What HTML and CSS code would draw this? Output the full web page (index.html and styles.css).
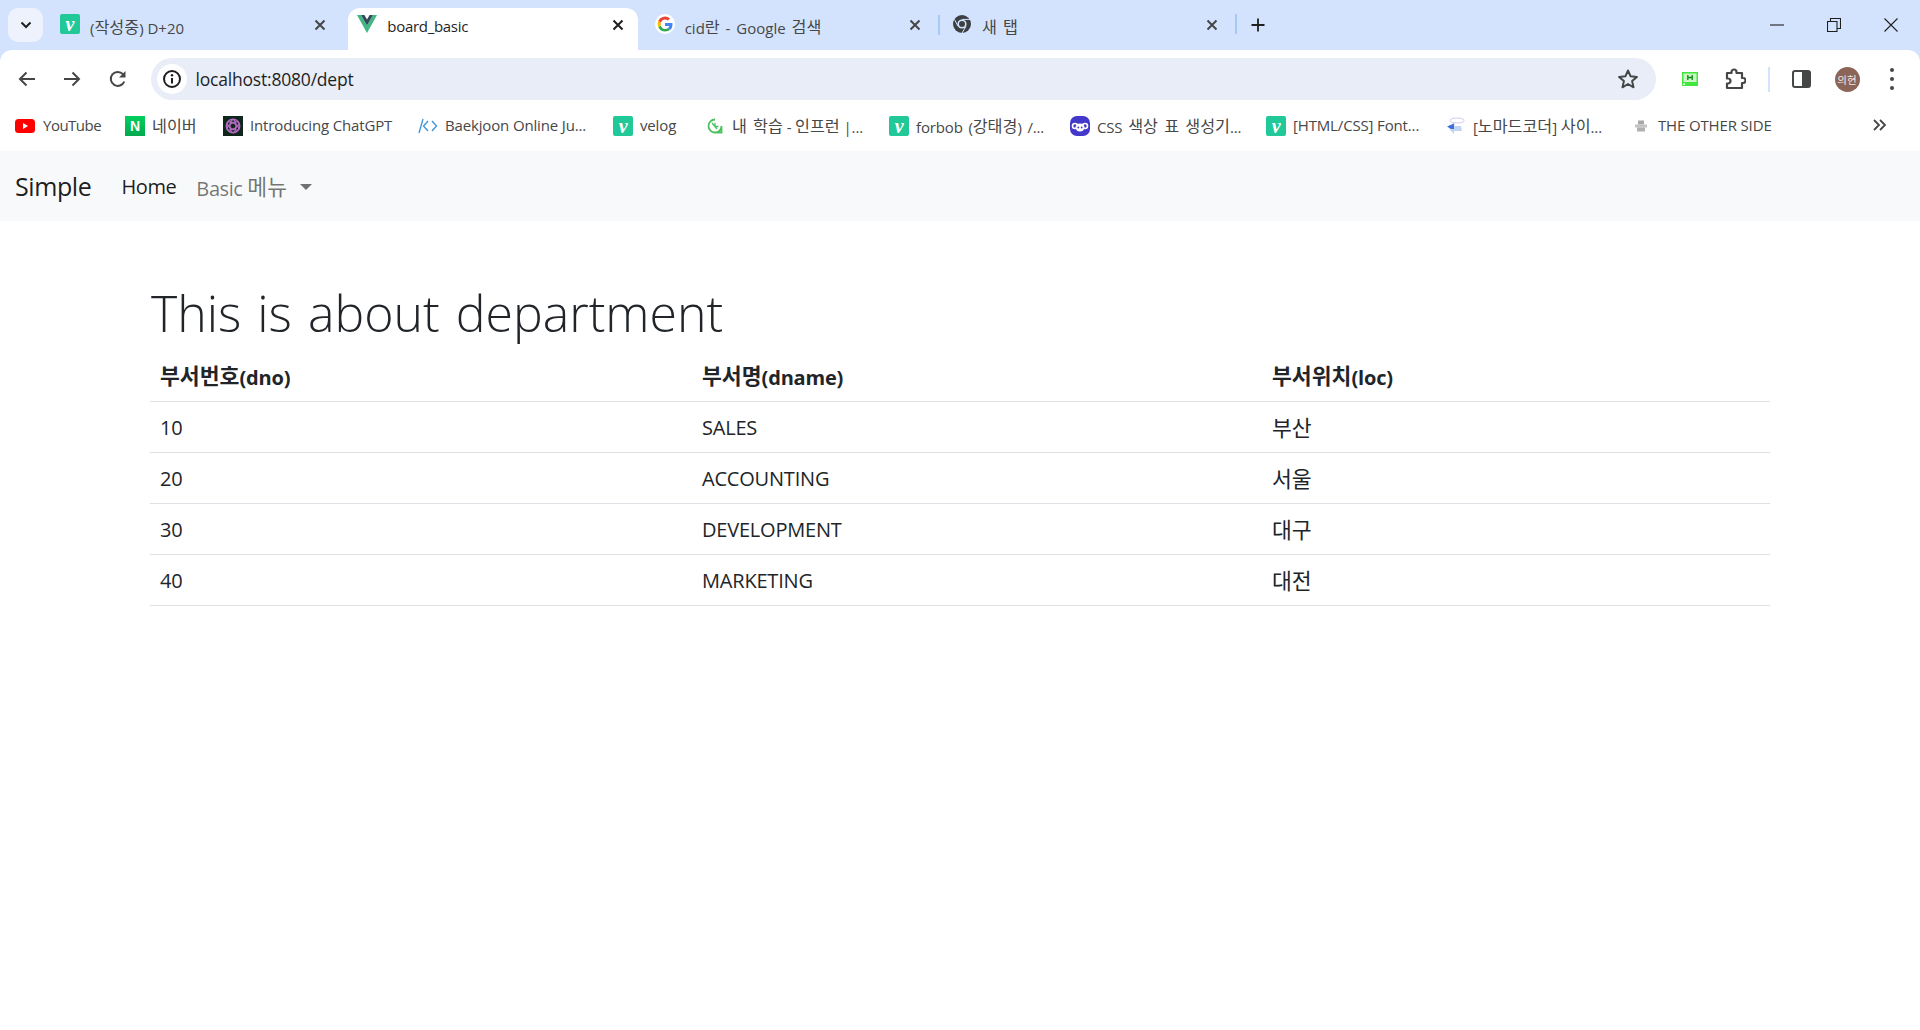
FILE: index.html
```html
<!DOCTYPE html>
<html lang="ko">
<head>
<meta charset="utf-8">
<title>board_basic</title>
<link rel="stylesheet" href="styles.css">
</head>
<body>
<header class="chrome">
  <div class="tabstrip">
    <button class="tablist"><svg width="14" height="14" viewBox="0 0 14 14"><path d="M2.500 4.500 7 9l4.500-4.500" fill="none" stroke="#1f1f1f" stroke-width="2"/></svg></button>
    <div class="tab">
      <span class="fav velog">v</span><span class="tab-title">(<span class="hg">작성중</span>) D+20</span>
      <svg class="tab-x" width="12" height="12" viewBox="0 0 12 12"><path d="M1.500 1.500l9 9M10.500 1.500l-9 9" stroke="#444746" stroke-width="2"/></svg>
    </div>
    <div class="tab active">
      <svg class="fav" width="20" height="20" viewBox="0 0 20 18"><path d="M0 0h4l6 10.500L16 0h4L10 18z" fill="#41b883"/><path d="M4 0h3.400L10 4.600 12.600 0H16l-6 10.500z" fill="#35495e"/></svg><span class="tab-title dark">board_basic</span>
      <svg class="tab-x" width="12" height="12" viewBox="0 0 12 12"><path d="M1.500 1.500l9 9M10.500 1.500l-9 9" stroke="#1f1f1f" stroke-width="2"/></svg>
    </div>
    <div class="tab">
      <svg class="fav" width="20" height="20" viewBox="0 0 20 20"><circle cx="10" cy="10" r="10" fill="#fff"/><path d="M10 9v3h4.300a4.400 4.400 0 0 1-1.600 2.200l2.400 1.900c1.500-1.400 2.400-3.400 2.400-5.700 0-.5 0-1-.1-1.400z" fill="#4285f4"/><path d="M5.900 11.300 5.300 11.800l-2 1.500A7.500 7.500 0 0 0 10 17.500c2 0 3.800-.7 5.100-1.400l-2.400-1.900c-.7.5-1.600.8-2.700.8-2 0-3.600-1.300-4.100-3.200z" fill="#34a853"/><path d="M3.300 6.700a7.500 7.500 0 0 0 0 6.600l2.600-2a4.400 4.400 0 0 1 0-2.600z" fill="#fbbc05"/><path d="M10 5.500c1.100 0 2.100.4 2.900 1.100l2.100-2.100A7.500 7.500 0 0 0 3.300 6.700l2.600 2C6.400 6.900 8 5.500 10 5.500z" fill="#ea4335"/></svg><span class="tab-title spaced">cid<span class="hg">란</span> - Google <span class="hg">검색</span></span>
      <svg class="tab-x" width="12" height="12" viewBox="0 0 12 12"><path d="M1.500 1.500l9 9M10.500 1.500l-9 9" stroke="#444746" stroke-width="2"/></svg>
    </div>
    <div class="tab sep">
      <svg class="fav" width="20" height="20" viewBox="0 0 20 20"><circle cx="10" cy="10" r="9" fill="#3c4043"/><circle cx="10" cy="10" r="4.600" fill="#d3e3fd"/><circle cx="10" cy="10" r="3" fill="#3c4043"/><path d="M10 5.400h8M6 12.300 2.500 5.500M14 12.300 10 19" stroke="#d3e3fd" stroke-width="1"/></svg><span class="tab-title spaced"><span class="hg">새 탭</span></span>
      <svg class="tab-x" width="12" height="12" viewBox="0 0 12 12"><path d="M1.500 1.500l9 9M10.500 1.500l-9 9" stroke="#444746" stroke-width="2"/></svg>
    </div>
    <div class="newtab sep"><svg width="14" height="14" viewBox="0 0 14 14"><path d="M7 .5v13M.5 7h13" stroke="#1f1f1f" stroke-width="1.800"/></svg></div>
    <div class="winctl">
      <svg width="14" height="14" viewBox="0 0 14 14"><path d="M0 7h14" stroke="#1f1f1f" stroke-width="1.100"/></svg>
      <svg width="14" height="14" viewBox="0 0 14 14"><path d="M.5 3.500h9.500v10H.5zM3.500 3.500V.5h10v10H10" fill="none" stroke="#1f1f1f" stroke-width="1.100"/></svg>
      <svg width="14" height="14" viewBox="0 0 14 14"><path d="M.5.500l13 13M13.500.5l-13 13" stroke="#1f1f1f" stroke-width="1.100"/></svg>
    </div>
  </div>

  <div class="toolbar">
    <span class="tbtn"><svg width="20" height="20" viewBox="0 0 20 20"><path d="M18 10H3M9.500 3.500 3 10l6.500 6.500" fill="none" stroke="#444746" stroke-width="2"/></svg></span>
    <span class="tbtn"><svg width="20" height="20" viewBox="0 0 20 20"><path d="M2 10h15M10.500 3.500 17 10l-6.500 6.500" fill="none" stroke="#444746" stroke-width="2"/></svg></span>
    <span class="tbtn"><svg width="20" height="20" viewBox="0 0 20 20"><path d="M16.300 12.500A7 7 0 1 1 15 5.200" fill="none" stroke="#444746" stroke-width="2"/><path d="M17.500 2v6.500H11z" fill="#444746"/></svg></span>
    <div class="omnibox">
      <span class="info"><svg width="20" height="20" viewBox="0 0 20 20"><circle cx="10" cy="10" r="8" fill="none" stroke="#1f1f1f" stroke-width="2"/><path d="M10 9v5.500" stroke="#1f1f1f" stroke-width="2"/><circle cx="10" cy="6.300" r="1.200" fill="#1f1f1f"/></svg></span>
      <span class="url">localhost:8080/dept</span>
      <svg class="star" width="22" height="22" viewBox="0 0 22 22"><path d="M11 2.500l2.600 5.800 6.300.6-4.800 4.200 1.400 6.200L11 16l-5.500 3.300 1.400-6.200L2.100 8.900l6.300-.6z" fill="none" stroke="#444746" stroke-width="2" stroke-linejoin="round"/></svg>
    </div>
    <div class="tools">
      <span class="tool t-ext"><svg width="16" height="14" viewBox="0 0 16 14"><rect width="16" height="14" fill="#42e63c"/><rect x="1.500" y="1.500" width="13" height="8.500" fill="#c9f8c2"/><path d="M5.800 3v5M10.200 3v5M5.800 5.500h4.400" stroke="#0c8a1c" stroke-width="1.300"/><rect x="1" y="11.500" width="2" height="1.500" fill="#fff"/></svg></span>
      <span class="tool t-puzzle"><svg width="22" height="22" viewBox="0 0 22 22"><path d="M3 5h4.500V4a2.500 2.500 0 0 1 5 0v1H18v5h1a2.500 2.500 0 0 1 0 5h-1v5H3v-4.500h1a2.500 2.500 0 0 0 0-5H3z" fill="none" stroke="#444746" stroke-width="2.200" stroke-linejoin="round"/></svg></span>
      <span class="tool-sep"></span>
      <span class="tool t-panel"><svg width="19" height="18" viewBox="0 0 19 18"><rect x="1" y="1" width="17" height="16" rx="2" fill="none" stroke="#444746" stroke-width="2"/><rect x="10" y="1" width="8" height="16" fill="#444746"/></svg></span>
      <span class="avatar">의현</span>
      <span class="tool t-menu"><i></i><i></i><i></i></span>
    </div>
  </div>

  <nav class="bookmarks">
    <span class="bm"><svg class="bi" width="20" height="14" viewBox="0 0 20 14"><rect width="20" height="14" rx="3.500" fill="#f00"/><path d="M8 4l5 3-5 3z" fill="#fff"/></svg><span class="label tight">YouTube</span></span>
    <span class="bm"><span class="bi naver">N</span><span class="label hg">네이버</span></span>
    <span class="bm"><span class="bi gpt"><svg width="16" height="16" viewBox="0 0 16 16" fill="none" stroke="#b56cc4" stroke-width="1.300"><circle cx="8" cy="8" r="6.800"/><ellipse cx="8" cy="8" rx="6.500" ry="3" transform="rotate(30 8 8)"/><ellipse cx="8" cy="8" rx="6.500" ry="3" transform="rotate(-30 8 8)"/><ellipse cx="8" cy="8" rx="6.500" ry="3" transform="rotate(90 8 8)"/></svg></span><span class="label">Introducing ChatGPT</span></span>
    <span class="bm"><svg class="bi" width="20" height="20" viewBox="0 0 20 20" fill="none" stroke="#3a93d8" stroke-width="1.300"><path d="M5 3 1 17"/><path d="M10 5 5.500 10l4.500 5M14 5l4.500 5-4.500 5"/></svg><span class="label">Baekjoon Online Ju...</span></span>
    <span class="bm"><span class="bi velog">v</span><span class="label">velog</span></span>
    <span class="bm"><svg class="bi" width="20" height="20" viewBox="0 0 20 20" fill="none" stroke="#4cc15f" stroke-width="1.800"><path d="M10 3.500a6.500 6.500 0 1 0 6.500 6.500v6.500H10"/><path d="M7 7l5 6M10 10.500V7M10 10.500h3.500" stroke-width="1.300"/></svg><span class="label"><span class="hg">내 학습</span> - <span class="hg">인프런</span> |...</span></span>
    <span class="bm"><span class="bi velog">v</span><span class="label spaced">forbob (<span class="hg">강태경</span>) /...</span></span>
    <span class="bm"><svg class="bi" width="20" height="20" viewBox="0 0 20 20"><rect width="20" height="20" rx="7" fill="#4338ca"/><ellipse cx="10" cy="11.500" rx="4.500" ry="4" fill="#fff"/><circle cx="5" cy="10" r="2.500" fill="none" stroke="#fff" stroke-width="1.600"/><circle cx="15" cy="10" r="2.500" fill="none" stroke="#fff" stroke-width="1.600"/><circle cx="8.300" cy="11.500" r=".9" fill="#4338ca"/><circle cx="11.700" cy="11.500" r=".9" fill="#4338ca"/></svg><span class="label spaced">CSS <span class="hg">색상 표 생성기</span>...</span></span>
    <span class="bm"><span class="bi velog">v</span><span class="label">[HTML/CSS] Font...</span></span>
    <span class="bm"><svg class="bi" width="20" height="20" viewBox="0 0 20 20"><ellipse cx="11" cy="4.500" rx="7" ry="2.500" fill="#fff" stroke="#d5c9e8" stroke-width="1"/><path d="M2 10.500 9 7l-1 3h7l1 5H8v3l-3-3z" fill="#c3d4f2"/><path d="M1 10.500 8 7.500v5.500H5z" fill="#3c6fe0"/></svg><span class="label">[<span class="hg">노마드코더</span>] <span class="hg">사이</span>...</span></span>
    <span class="bm"><svg class="bi" width="20" height="20" viewBox="0 0 20 20"><rect x="7" y="4.500" width="6" height="4" fill="#a8a8a8"/><rect x="4" y="8.500" width="12" height="3" fill="#c4c4c4"/><rect x="6" y="11.500" width="8" height="4" fill="#b0b0b0"/></svg><span class="label">THE OTHER SIDE</span></span>
    <svg class="bm-more" width="16" height="14" viewBox="0 0 16 14" fill="none" stroke="#444746" stroke-width="1.800"><path d="M2 2l5 5-5 5M8 2l5 5-5 5"/></svg>
  </nav>
</header>

<nav class="navbar">
  <a class="brand">Simple</a>
  <a class="nav-link current">Home</a>
  <a class="nav-link">Basic <span class="hg">메뉴</span><span class="caret"></span></a>
</nav>

<main class="container">
  <h1 class="title">This is about department</h1>
  <table class="dept">
    <thead>
      <tr><th class="c1"><span class="hg">부서번호</span>(dno)</th><th class="c2"><span class="hg">부서명</span>(dname)</th><th><span class="hg">부서위치</span>(loc)</th></tr>
    </thead>
    <tbody>
      <tr><td>10</td><td>SALES</td><td><span class="hg">부산</span></td></tr>
      <tr><td>20</td><td>ACCOUNTING</td><td><span class="hg">서울</span></td></tr>
      <tr><td>30</td><td>DEVELOPMENT</td><td><span class="hg">대구</span></td></tr>
      <tr><td>40</td><td>MARKETING</td><td><span class="hg">대전</span></td></tr>
    </tbody>
  </table>
</main>
</body>
</html>
```
FILE: styles.css
```css
* { box-sizing: border-box; }
html, body { margin: 0; padding: 0; background: #fff; }
body {
  font-family: "Open Sans", "Noto Sans CJK KR", sans-serif;
  color: #212529;
  height: 1030px;
  overflow: hidden;
}
.hg { font-size: 1.08em; letter-spacing: 0; word-spacing: 2px; vertical-align: 1px; }
.spaced { word-spacing: 2px; }

/* browser frame */
.chrome { background: #d3e3fd; }
.tabstrip {
  display: flex;
  height: 50px;
  position: relative;
}
.tablist {
  flex: none;
  width: 35px;
  height: 34px;
  margin: 8px 4px 0 8px;
  border: 0;
  border-radius: 10px;
  background: #edf2fc;
  display: flex;
  align-items: center;
  justify-content: center;
  padding: 0;
}
.tab {
  flex: none;
  width: 297.33px;
  height: 50px;
  padding: 0 13px;
  display: flex;
  align-items: center;
  position: relative;
  font-size: 15px;
  color: #474747;
}
.tab .fav { margin-top: -3px; }
.fav { flex: none; width: 20px; height: 20px; }
.tab-title { margin-left: 10px; flex: 1; margin-top: 2px; white-space: nowrap; }
.tab-title.dark { color: #1f1f1f; letter-spacing: -0.3px; }
.tab-x { flex: none; margin-right: 5px; margin-top: -1px; }
.tab.active::before {
  content: "";
  position: absolute;
  left: 3.5px;
  right: 3.5px;
  top: 8px;
  bottom: 0;
  background: #fff;
  border-radius: 12px 12px 0 0;
}
.tab.active > * { position: relative; }
.tab.active { z-index: 1; }
.sep::after {
  content: "";
  position: absolute;
  left: -1px;
  top: 15px;
  width: 2px;
  height: 20px;
  background: #a8c7fa;
}
.newtab {
  flex: none;
  width: 44px;
  position: relative;
  display: flex;
  align-items: center;
  justify-content: center;
  margin-top: -1px;
}
.winctl {
  margin-left: auto;
  width: 150px;
  padding: 0 22px 1px 0;
  display: flex;
  align-items: center;
  justify-content: flex-end;
  gap: 43px;
}

.toolbar {
  height: 58px;
  background: #fff;
  border-radius: 12px 12px 0 0;
  padding: 8px 0;
  display: flex;
  align-items: center;
}
.tbtn {
  flex: none;
  width: 45.5px;
  display: flex;
  align-items: center;
  justify-content: center;
}
.tbtn:first-child { margin-left: 4px; }
.omnibox {
  flex: none;
  width: 1505px;
  height: 42px;
  margin-left: 10px;
  border-radius: 21px;
  background: #e9edf8;
  padding: 0 17px 0 6px;
  display: flex;
  align-items: center;
  font-size: 17.5px;
  color: #1f1f1f;
}
.info {
  width: 30px;
  height: 30px;
  border-radius: 50%;
  background: #fff;
  display: flex;
  align-items: center;
  justify-content: center;
}
.url { margin-left: 9px; flex: 1; letter-spacing: -0.2px; }
.star { flex: none; }
.tools { flex: 1; display: flex; align-items: center; position: relative; }
.tool { flex: none; display: flex; align-items: center; justify-content: center; }
.t-ext { width: 16px; margin-left: 26px; }
.t-puzzle { width: 24px; margin-left: 25px; }
.tool-sep { width: 2px; height: 25px; background: #d3e3fd; margin-left: 21px; }
.t-panel { width: 19px; margin-left: 22px; }
.avatar {
  flex: none;
  width: 25px;
  height: 25px;
  margin-left: 24px;
  border-radius: 50%;
  background: #8b6558;
  color: #f1e9e6;
  font-size: 10.5px;
  display: flex;
  align-items: center;
  justify-content: center;
  white-space: nowrap;
}
.t-menu { flex-direction: column; gap: 4.5px; width: 5px; margin-left: 30px; }
.t-menu i { display: block; width: 4.5px; height: 4.5px; border-radius: 50%; background: #444746; }

.bookmarks {
  height: 43px;
  background: #fff;
  display: grid;
  grid-template-columns: 110px 98px 195px 195px 92px 184px 181px 196px 180px 185px 1fr;
  padding: 0 0 7px 15px;
  align-items: center;
  position: relative;
  font-size: 15px;
  color: #474747;
}
.bm { display: flex; align-items: center; white-space: nowrap; letter-spacing: -0.15px; }
.label { margin-top: -2px; }
.tight { letter-spacing: -0.5px; margin-left: 1px; }
.bi { flex: none; width: 20px; margin-right: 7px; }
.velog, .naver {
  height: 20px;
  display: inline-flex;
  align-items: center;
  justify-content: center;
  color: #fff;
}
.velog {
  background: #20c997;
  border-radius: 2px;
  font: italic 700 20px/20px "Liberation Serif", serif;
}
.naver {
  background: linear-gradient(#03cf5d, #03a94d);
  font: 900 14px/20px "Liberation Sans", sans-serif;
}
.gpt {
  height: 20px;
  background: #10261c;
  display: inline-flex;
  align-items: center;
  justify-content: center;
}
.bm-more { position: absolute; right: 32px; top: 10px; }

/* page */
.navbar {
  height: 70px;
  background: #f8f9fa;
  padding: 0 15px;
  display: flex;
  align-items: center;
}
.brand { font-size: 25px; color: #000000e6; margin-right: 30px; letter-spacing: -0.4px; }
.nav-link { font-size: 20px; color: #0000008c; margin-right: 20px; letter-spacing: -0.4px; }
.nav-link.current { color: #000000e6; }
.caret {
  display: inline-block;
  margin-left: 13px;
  vertical-align: 6px;
  border-top: 6px solid #0000008c;
  border-left: 6px solid transparent;
  border-right: 6px solid transparent;
}

.container { padding: 57px 150px 0; }
.title {
  margin: 0;
  height: 72px;
  font-size: 50px;
  font-weight: 350;
  line-height: 70px;
  word-spacing: 3px;
  padding-left: 1px;
}
.dept { width: 100%; border-collapse: collapse; table-layout: fixed; font-size: 20px; }
.dept th, .dept td {
  height: 51px;
  padding: 1px 10px 0;
  text-align: left;
  border-bottom: 1px solid #dee2e6;
  vertical-align: middle;
  letter-spacing: -0.2px;
}
.dept th { font-weight: 700; padding-top: 0; }
.c1 { width: 542px; }
.c2 { width: 570px; }
```
